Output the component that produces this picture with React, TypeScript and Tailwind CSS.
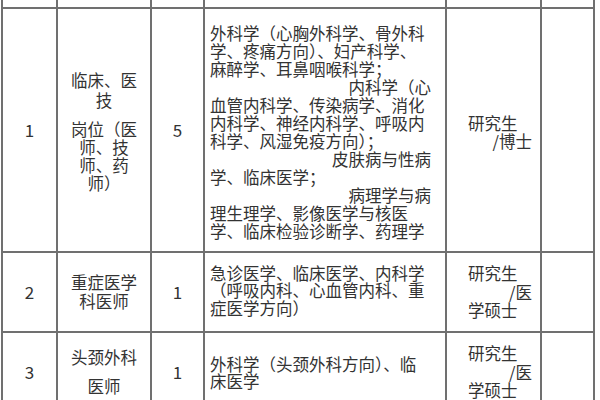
import React from "react";

const font = { fontFamily: '"Noto Sans CJK SC", "Noto Sans", sans-serif' };

type Line = { t: string; right?: boolean };

const cell = "border-r-2 border-b-2 border-[#707070] flex items-center";

function Lines({ lines, className }: { lines: Line[]; className?: string }) {
    return (
        <div className={className}>
            {lines.map((l, i) => (
                <div key={i} className={l.right ? "text-right whitespace-nowrap" : "whitespace-nowrap"}>
                    {l.t}
                </div>
            ))}
        </div>
    );
}

const row1Majors: Line[] = [
    { t: "外科学（心胸外科学、骨外科" },
    { t: "学、疼痛方向）、妇产科学、" },
    { t: "麻醉学、耳鼻咽喉科学；" },
    { t: "内科学（心", right: true },
    { t: "血管内科学、传染病学、消化" },
    { t: "内科学、神经内科学、呼吸内" },
    { t: "科学、风湿免疫方向）；" },
    { t: "皮肤病与性病", right: true },
    { t: "学、临床医学；" },
    { t: "病理学与病", right: true },
    { t: "理生理学、影像医学与核医" },
    { t: "学、临床检验诊断学、药理学" },
];

function Degree({ second }: { second: string }) {
    return (
        <div className="w-[64px] ml-[21px] leading-[18.5px]">
            <div className="whitespace-nowrap">研究生</div>
            <div className="text-right whitespace-nowrap">{second}</div>
            {second === "/医" && <div className="whitespace-nowrap">学硕士</div>}
        </div>
    );
}

export default function App() {
    return (
        <div className="w-[600px] h-[400px] overflow-hidden bg-white text-[#333] text-[16.5px]" style={font}>
            <div className="ml-[1px] w-[594px] border-l-2 border-[#707070] grid grid-cols-[55px_94px_53px_242px_95px_53px]">
                {/* previous row, cut off */}
                <div className={cell + " h-[9px]"} />
                <div className={cell + " h-[9px]"} />
                <div className={cell + " h-[9px]"} />
                <div className={cell + " h-[9px]"} />
                <div className={cell + " h-[9px]"} />
                <div className={cell + " h-[9px]"} />

                {/* row 1 */}
                <div className={cell + " h-[244px] justify-center text-[17px]"}>1</div>
                <div className={cell + " h-[244px] justify-center text-center"}>
                    <div className="pt-[2px]">
                        <div className="leading-[20px]">
                            <div>临床、医</div>
                            <div>技</div>
                        </div>
                        <div className="mt-[10px] leading-[18px]">
                            <div>岗位（医</div>
                            <div>师、技</div>
                            <div>师、药</div>
                            <div>师）</div>
                        </div>
                    </div>
                </div>
                <div className={cell + " h-[244px] justify-center text-[17px]"}>5</div>
                <div className={"border-r-2 border-b-2 border-[#707070] h-[244px] pt-[15px]"}>
                    <Lines lines={row1Majors} className="w-[221px] ml-[5px] leading-[18px]" />
                </div>
                <div className={cell + " h-[244px] pt-[4px]"}>
                    <Degree second="/博士" />
                </div>
                <div className={cell + " h-[244px]"} />

                {/* row 2 */}
                <div className={cell + " h-[80px] justify-center text-[17px]"}>2</div>
                <div className={cell + " h-[80px] justify-center text-center leading-[19px]"}>
                    <div>
                        <div>重症医学</div>
                        <div>科医师</div>
                    </div>
                </div>
                <div className={cell + " h-[80px] justify-center text-[17px]"}>1</div>
                <div className={cell + " h-[80px]"}>
                    <Lines
                        lines={[
                            { t: "急诊医学、临床医学、内科学" },
                            { t: "（呼吸内科、心血管内科、重" },
                            { t: "症医学方向）" },
                        ]}
                        className="ml-[5px] leading-[17.5px] -mt-[2px]"
                    />
                </div>
                <div className={cell + " h-[80px]"}>
                    <Degree second="/医" />
                </div>
                <div className={cell + " h-[80px]"} />

                {/* row 3 */}
                <div className={cell + " h-[80px] justify-center text-[17px]"}>3</div>
                <div className={cell + " h-[80px] justify-center text-center leading-[29px]"}>
                    <div>
                        <div>头颈外科</div>
                        <div>医师</div>
                    </div>
                </div>
                <div className={cell + " h-[80px] justify-center text-[17px]"}>1</div>
                <div className={cell + " h-[80px]"}>
                    <Lines
                        lines={[{ t: "外科学（头颈外科方向）、临" }, { t: "床医学" }]}
                        className="ml-[5px] leading-[17.5px] mt-[2px]"
                    />
                </div>
                <div className={cell + " h-[80px]"}>
                    <Degree second="/医" />
                </div>
                <div className={cell + " h-[80px]"} />
            </div>
        </div>
    );
}
